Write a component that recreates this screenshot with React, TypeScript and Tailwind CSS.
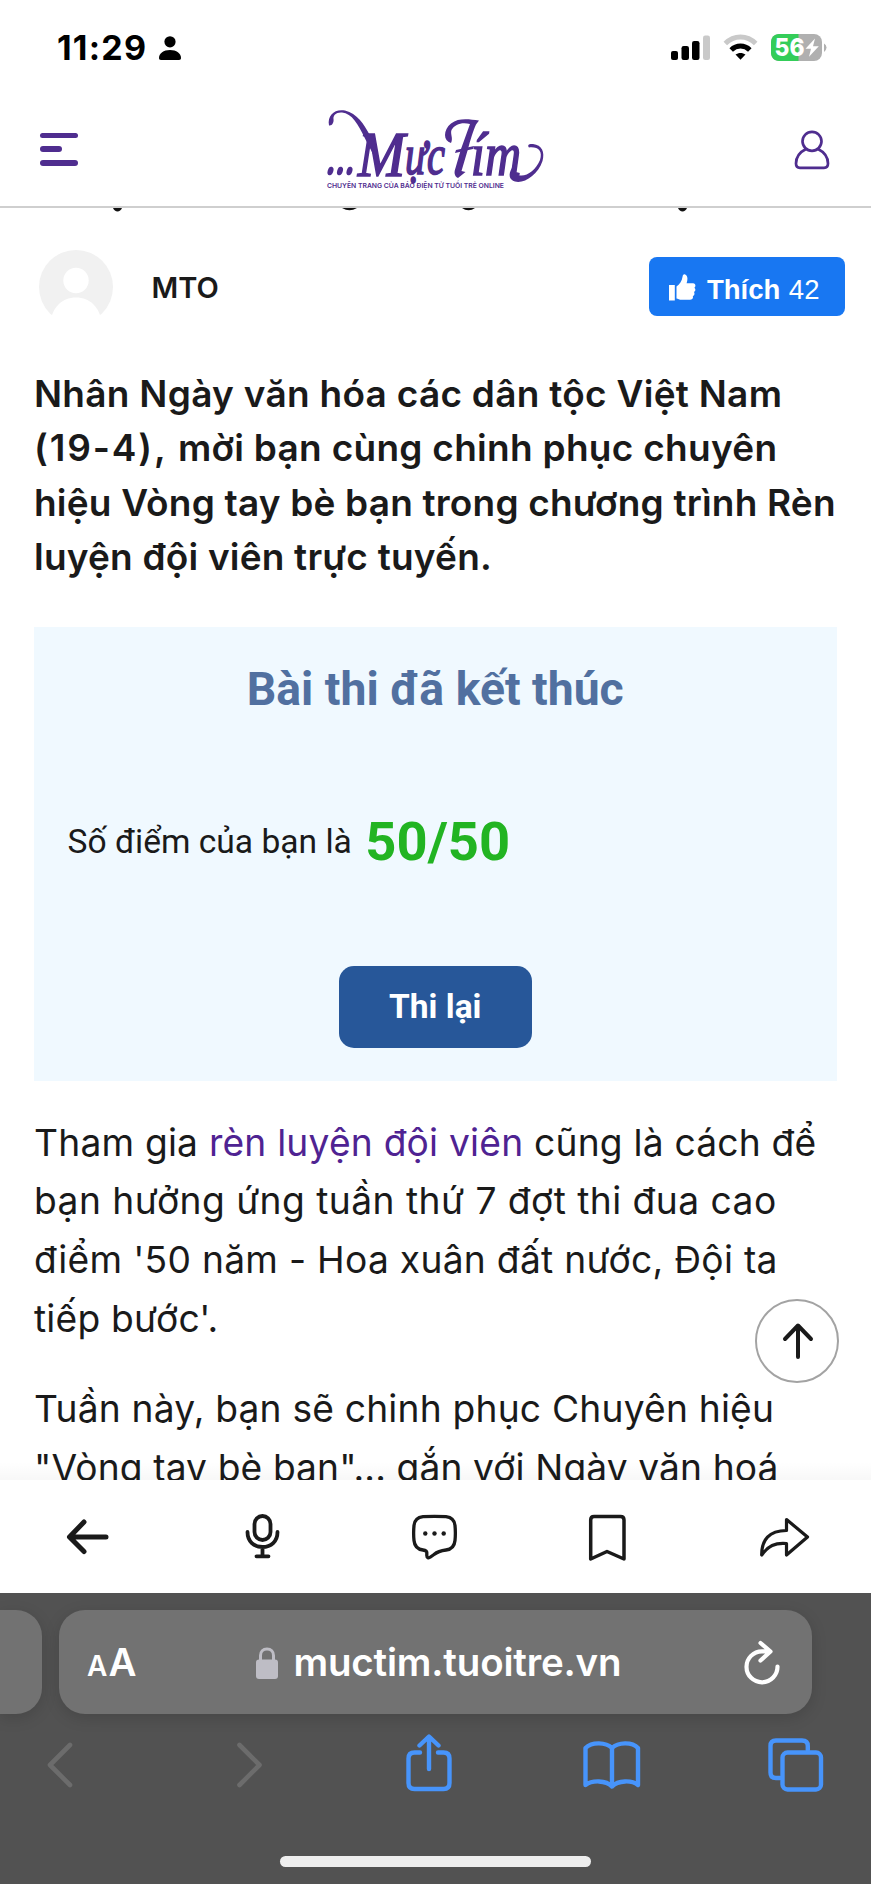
import type { ReactNode } from 'react';

function StatusBar() {
  return (
    <div className="flex h-[96px] items-center justify-between pl-[57px] pr-[44px]">
      <div className="flex items-center text-black">
        <span className="w-[102px] text-[34px] leading-none font-bold tracking-[1.200px]">11:29</span>
        <svg className="h-[24px] w-[22px]" viewBox="0 0 22 24" fill="currentColor">
          <circle cx="11" cy="5.8" r="5.6" />
          <path d="M2 24C.6 24 0 23 0 21.700C0 17.500 4.600 14 11 14S22 17.500 22 21.700C22 23 21.400 24 20 24Z" />
        </svg>
      </div>
      <div className="flex items-center">
        <svg className="h-[36px] w-[156px]" viewBox="0 -4 156 36">
          <rect x="0" y="17" width="7" height="9" rx="2" />
          <rect x="10.500" y="12" width="7.500" height="14" rx="2.200" />
          <rect x="21" y="7" width="7.500" height="19" rx="2.200" />
          <rect x="32" y="1.500" width="7" height="24.500" rx="2.200" fill="#c9c9c9" />
          <path d="M54.300 9.600C63 .9 76 .9 84.700 9.600" fill="none" stroke="#c9c9c9" strokeWidth="5" />
          <path d="M60.200 16C65.500 10.800 73.500 10.800 78.800 16" fill="none" stroke="#000" strokeWidth="5" />
          <path d="M64.500 20.500C67.500 18.400 71.500 18.400 74.500 20.500L69.500 25.700Z" />
          <rect x="100" y="0" width="51" height="27" rx="8" fill="#b0b0b0" />
          <path d="M108 0H127.500V27H108C103.600 27 100 23.400 100 19V8C100 3.600 103.600 0 108 0Z" fill="#34cd59" />
          <path d="M153 9.500Q155.500 11 155.500 13.500T153 18Z" fill="#b0b0b0" />
          <text x="103.500" y="22.300" fontFamily="Inter, sans-serif" fontWeight="800" fontSize="25" fill="#fff" textLength="30" lengthAdjust="spacingAndGlyphs">56</text>
          <path d="M144 4.500L134.500 14.800H140L138 22.800L147.800 12.200H142Z" fill="#fff" />
        </svg>
      </div>
    </div>
  );
}

function Logo() {
  return (
    <svg className="h-[86px] w-[224px]" viewBox="324 106 224 86" fill="#4f2d8f">
      <g fontFamily="'Liberation Serif', serif" fontStyle="italic" stroke="#4f2d8f" strokeWidth="1.700">
        <g stroke="none">
          <ellipse cx="331.500" cy="171" rx="2.800" ry="4.400" transform="rotate(18 331.500 171)" />
          <ellipse cx="341" cy="171" rx="2.800" ry="4.400" transform="rotate(18 341 171)" />
          <ellipse cx="350.500" cy="171" rx="2.800" ry="4.400" transform="rotate(18 350.500 171)" />
        </g>
        <text x="359" y="176" fontSize="63" textLength="47" lengthAdjust="spacingAndGlyphs">M</text>
        <text x="406" y="174" fontSize="56" textLength="40" lengthAdjust="spacingAndGlyphs">ực</text>
        <text x="472" y="175" fontSize="62" textLength="50" lengthAdjust="spacingAndGlyphs">ím</text>
      </g>
      <path d="M330 125.500C328 115 336 108.500 346 110.500C358 113.500 365 124 371 135.500L377 146L374 154L366 138.500C359 124 353 113.500 343 112.500C337 112 334 115.500 334.500 119C335 122 333.500 126 330 125.500Z" />
      <path d="M452 143C444 141 444 130 452 123.500C460 117.500 470 119.500 480 120.500L477 124.500C474.500 130 471 141 469 149L462.500 171L466.500 172L459 178C455 176 455 172 456.500 168L462 149L471 124C463 122 456 124 452.500 130C451 134 454.500 138 452 143Z" />
      <path d="M457 150L475 146L474 149L456 153Z" />
      <path d="M513 168C518 182 535 175 541 160C544 151 539 146.500 530 147.500C528 145 530 143.500 534 144C543 145 546 152 543.500 161C539 175 525 184 516 181.500C510 180 509 174 513 168Z" />
      <text x="328" y="187.500" fontFamily="Inter, sans-serif" fontWeight="600" fontSize="6.800" textLength="177" lengthAdjust="spacingAndGlyphs">CHUYÊN TRANG CỦA BÁO ĐIỆN TỬ TUỔI TRẺ ONLINE</text>
    </svg>
  );
}

function SiteHeader() {
  return (
    <div className="flex h-[110px] items-start justify-between pl-[40px] pr-[41px]">
      <button className="mt-[36.500px] flex w-[224px] flex-col gap-[8.200px]">
        <span className="h-[5.800px] w-[38px] rounded-full bg-[#4f2d8f]" />
        <span className="h-[5.800px] w-[22px] rounded-full bg-[#4f2d8f]" />
        <span className="h-[5.800px] w-[38px] rounded-full bg-[#4f2d8f]" />
      </button>
      <div className="mt-[10px] -ml-[1px]">
        <Logo />
      </div>
      <div className="mt-[33.500px] flex w-[224px] justify-end">
        <svg className="h-[40px] w-[36px]" viewBox="0 0 36 40" fill="none" stroke="#4f2d8f" strokeWidth="2.700">
          <circle cx="18" cy="11.300" r="9.500" />
          <path d="M12 19C6 22 2 27.500 2 33.500C2 36.700 3.600 37.800 6 37.800H30C32.500 37.800 34 36.700 34 33.500C34 27.500 30 22 24 19" />
        </svg>
      </div>
    </div>
  );
}

function TitleDescenders() {
  return (
    <svg className="h-[5px] w-full" viewBox="0 0 871 5" fill="#111">
      <path d="M113 0H122Q120.500 3.400 117.500 3.400T113 0Z" />
      <path d="M342 0H357Q353 2.300 349.500 2.300T342 0Z" />
      <path d="M462 0H475Q472 2.300 468.500 2.300T462 0Z" />
      <path d="M678 0H687Q685.500 3.400 682.500 3.400T678 0Z" />
    </svg>
  );
}

function Author() {
  return (
    <div className="flex h-[74px] items-center pl-[39px] pr-[26px]">
      <svg className="h-[74px] w-[74px]" viewBox="0 0 74 74">
        <circle cx="37" cy="37" r="37" fill="#f1f1f1" />
        <circle cx="37" cy="30.500" r="12.700" fill="#fff" />
        <path d="M11 74C13 57 23 47.500 37 47.500S61 57 63 74Z" fill="#fff" />
      </svg>
      <span className="mt-[1px] ml-[38.500px] text-[29px] font-semibold text-[#1a1a1a]">MTO</span>
      <button className="mb-[1px] ml-auto flex h-[59px] w-[196px] items-center rounded-[8px] bg-[#1877f2] pl-[20px] font-['Liberation_Sans',sans-serif] text-[27.500px] text-white">
        <svg className="mt-[2px] h-[27px] w-[27px]" viewBox="0 0 27 27" fill="currentColor">
          <path d="M0 11H5.800V26.500H0Z" />
          <path d="M7.500 12.500C10.500 10.500 13 7 13.600 2.500C13.800 .8 14.800 0 16.200 .4C19 1.400 18.800 6 17.600 9.300H24C26.600 9.300 27.200 12.400 25.400 13.700C27 15.200 26.500 17.300 25 18.100C26 19.800 25.300 21.500 23.800 22.100C24.500 24.300 23.300 25.700 21 25.700H12.500C10.500 25.700 9 24.800 7.500 24.400Z" />
        </svg>
        <span className="mt-[7px] ml-[11px] font-bold">Thích</span>
        <span className="mt-[7px] ml-[8.500px]">42</span>
      </button>
    </div>
  );
}

function Line({ className, children }: { className: string; children: ReactNode }) {
  return <span className={`block whitespace-nowrap ${className}`}>{children}</span>;
}

function Article() {
  return (
    <main className="relative h-[1272px] overflow-hidden text-[#1a1a1a]">
      <TitleDescenders />
      <div className="mt-[37px]">
        <Author />
      </div>
      <h2 className="mt-[42.500px] pl-[34px] text-[37px] leading-[54.600px] font-semibold">
        <Line className="tracking-[0.280px]">Nhân Ngày văn hóa các dân tộc Việt Nam</Line>
        <Line className="tracking-[0.280px]">
          <span className="tracking-[1.850px]">(19-4), </span>mời bạn cùng chinh phục chuyên
        </Line>
        <Line className="tracking-[0.190px]">hiệu Vòng tay bè bạn trong chương trình Rèn</Line>
        <Line className="tracking-[0.200px]">luyện đội viên trực tuyến.</Line>
      </h2>
      <section className="mt-[42.100px] mr-[34px] ml-[33.500px] flex h-[454px] flex-col bg-[#f0f9ff] font-[Roboto,sans-serif]">
        <h3 className="mt-[35px] text-center text-[46.300px] leading-[54px] font-bold text-[#5170a0]">Bài thi đã kết thúc</h3>
        <p className="mt-[91px] flex h-[70px] items-center pl-[34px] whitespace-nowrap">
          <span className="text-[33.600px] leading-[40px]">Số điểm của bạn là</span>
          <span className="ml-[13.500px] text-[54.300px] leading-[70px] font-bold text-[#22b422]">50/50</span>
        </p>
        <button className="mx-auto mt-[89px] h-[82px] w-[193px] rounded-[15px] bg-[#275799] text-[33.500px] font-bold text-white">Thi lại</button>
      </section>
      <div className="mt-[32.600px] flex flex-col gap-[31px] pl-[34px] text-[37.200px] leading-[58.900px]">
        <p>
          <Line className="tracking-[0.200px]">
            Tham gia <a className="text-[#4f2392]">rèn luyện đội viên</a> cũng là cách để
          </Line>
          <Line className="tracking-[0.450px]">bạn hưởng ứng tuần thứ 7 đợt thi đua cao</Line>
          <Line className="tracking-[0.280px]">điểm '50 năm - Hoa xuân đất nước, Đội ta</Line>
          <Line className="tracking-[0.200px]">tiếp bước'.</Line>
        </p>
        <p>
          <Line className="tracking-[0.190px]">Tuần này, bạn sẽ chinh phục Chuyên hiệu</Line>
          <Line className="tracking-[0.100px]">"Vòng tay bè bạn"... gắn với Ngày văn hoá</Line>
        </p>
      </div>
      <div className="absolute inset-x-0 bottom-0 h-[18px] bg-gradient-to-b from-transparent to-black/[0.03]" />
      <button className="absolute top-[1091px] right-[32px] flex h-[84px] w-[84px] items-center justify-center rounded-full border-2 border-[#a3a3a3] bg-white pl-[2px]">
        <svg className="h-[38px] w-[32px]" viewBox="0 0 32 38" fill="none" stroke="#1a1a1a" strokeWidth="4" strokeLinecap="round" strokeLinejoin="round">
          <path d="M16 35V4M3 17L16 3.500L29 17" />
        </svg>
      </button>
    </main>
  );
}

function ArticleToolbar() {
  return (
    <div className="flex h-[113px] items-start bg-white pt-[32px] pl-[66px]">
      <svg className="h-[50px] w-[44px] shrink-0" viewBox="66 1512 44 50" fill="none" stroke="#1a1a1a" strokeWidth="5" strokeLinecap="round" strokeLinejoin="round">
        <path d="M106 1537H70M84 1522L69.500 1537L84 1551.500" />
      </svg>
      <svg className="ml-[134px] h-[50px] w-[38px] shrink-0" viewBox="244 1512 38 50" fill="none" stroke="#1a1a1a" strokeWidth="3.800" strokeLinecap="round">
        <rect x="254.500" y="1516" width="16" height="24" rx="8" />
        <path d="M247.500 1532C247.500 1541.500 254 1547 262.500 1547S277.500 1541.500 277.500 1532M262.500 1547V1556M256.500 1556.300H268.500" />
      </svg>
      <svg className="ml-[128px] h-[50px] w-[48px] shrink-0" viewBox="410 1512 48 50" fill="none" stroke="#1a1a1a" strokeWidth="3.300" strokeLinejoin="round">
        <path d="M423 1516.700C431 1516.200 438 1516.200 446 1516.700C451.500 1517.400 454.500 1520.500 455 1525.500C455.500 1530.500 455.500 1535.500 455 1540.500C454.500 1546 451.500 1549.300 446 1550C441 1550.600 437 1552 434 1554.500L430.500 1557C428.500 1558.500 426.800 1557.800 426.800 1555.500V1552.500C426.800 1551 425.500 1550.400 423 1550C417.500 1549.300 414.500 1546 414 1540.500C413.500 1535.500 413.500 1530.500 414 1525.500C414.500 1520.500 417.500 1517.400 423 1516.700Z" />
        <g fill="#1a1a1a" stroke="none">
          <circle cx="425.300" cy="1533.500" r="2.200" />
          <circle cx="434.500" cy="1533.500" r="2.200" />
          <circle cx="443.700" cy="1533.500" r="2.200" />
        </g>
      </svg>
      <svg className="ml-[128px] h-[50px] w-[42px] shrink-0" viewBox="586 1512 42 50" fill="none" stroke="#1a1a1a" strokeWidth="3.500" strokeLinejoin="round">
        <path d="M590.700 1520C590.700 1517.500 591.500 1516.500 594 1516.500H620.500C623 1516.500 624 1517.500 624 1520V1559L607 1551.500L590.700 1559Z" />
      </svg>
      <svg className="ml-[131px] h-[50px] w-[52px] shrink-0" viewBox="759 1512 52 50" fill="none" stroke="#1a1a1a" strokeWidth="3.200" strokeLinejoin="round">
        <path d="M786.500 1519.500L807.500 1537L786.500 1555V1543.500C775 1542.500 768 1546 761.700 1555C761.500 1540 769 1530.500 786.500 1530.500Z" />
      </svg>
    </div>
  );
}

function BrowserChrome() {
  return (
    <div className="h-[291px] overflow-hidden bg-[#525252] pt-[17px]">
      <div className="flex gap-[17px]">
        <div className="h-[104px] w-[42px] rounded-r-[26px] bg-[#727272] shadow-[0_4px_16px_rgba(0,0,0,0.14)]" />
        <div className="flex h-[104px] w-[753px] items-center rounded-[26px] bg-[#727272] pr-[30px] pl-[28px] text-white shadow-[0_4px_16px_rgba(0,0,0,0.14)]">
          <div className="flex h-[40px] w-[50px] items-baseline leading-[40px] font-semibold">
            <span className="text-[28px]">A</span>
            <span className="ml-[1px] text-[38.500px]">A</span>
          </div>
          <svg className="mt-[1px] ml-[118px] h-[32px] w-[24px]" viewBox="0 0 24 32">
            <rect x="1" y="12.500" width="22" height="19.500" rx="3" fill="#bebdc5" />
            <path d="M5.500 14V8.500C5.500 4.500 8 2 12 2S18.500 4.500 18.500 8.500V14" fill="none" stroke="#bebdc5" strokeWidth="3" />
          </svg>
          <span className="ml-[14.500px] text-[38.500px] leading-none font-semibold tracking-[-0.200px]">muctim.tuoitre.vn</span>
          <svg className="mb-[1px] ml-auto h-[46px] w-[40px]" viewBox="743 1636 40 46" fill="none" stroke="#fff" strokeWidth="4.200" strokeLinecap="round" strokeLinejoin="round">
            <path d="M770.500 1648.300H763A15.500 15.500 0 1 0 778.500 1663.500M761.500 1640L771.500 1648.500L761.500 1657.500" />
          </svg>
        </div>
      </div>
      <div className="mt-[18px] flex h-[64px] pl-[46px]">
        <svg className="h-[64px] w-[28px] shrink-0" viewBox="46 1732 28 64" fill="none" stroke="#6c6c6c" strokeWidth="4.600" strokeLinecap="round" strokeLinejoin="round">
          <path d="M70 1745L50 1765L70 1785" />
        </svg>
        <svg className="ml-[162px] h-[64px] w-[28px] shrink-0" viewBox="236 1732 28 64" fill="none" stroke="#6c6c6c" strokeWidth="4.600" strokeLinecap="round" strokeLinejoin="round">
          <path d="M239.500 1745L259.500 1765L239.500 1785" />
        </svg>
        <svg className="ml-[140px] h-[64px] w-[50px] shrink-0" viewBox="404.500 1732 50 64" fill="none" stroke="#4794fb" strokeWidth="4.400" strokeLinecap="round" strokeLinejoin="round">
          <path d="M420.500 1752.500H415Q409 1752.500 409 1758.500V1783Q409 1789 415 1789H444Q450 1789 450 1783V1758.500Q450 1752.500 444 1752.500H438.500M429.500 1769V1737M420 1745.500L429.500 1736.500L439 1745.500" />
        </svg>
        <svg className="ml-[126px] h-[64px] w-[64px] shrink-0" viewBox="580 1732 64 64" fill="none" stroke="#4794fb" strokeWidth="4.400" strokeLinecap="round" strokeLinejoin="round">
          <path d="M612 1748V1786.500M612 1748C606 1742.200 592 1741.500 585.500 1748V1785C592 1780 606 1780 612 1786.500C618 1780 632 1780 638 1785V1748C632 1741.500 618 1742.200 612 1748Z" />
        </svg>
        <svg className="ml-[123px] h-[64px] w-[58px] shrink-0" viewBox="767 1732 58 64" fill="none" stroke="#4794fb" strokeWidth="4.400" strokeLinejoin="round" strokeLinecap="round">
          <path d="M780 1778H776Q770.500 1778 770.500 1772.500V1746Q770.500 1740.500 776 1740.500H802Q807.800 1740.500 807.800 1746V1750" />
          <rect x="782.500" y="1752.500" width="38.500" height="37" rx="5" />
        </svg>
      </div>
      <div className="mt-[60px] ml-[280px] h-[11px] w-[311px] rounded-full bg-[#eeeeee]" />
    </div>
  );
}

export default function App() {
  return (
    <div className="h-[1884px] w-[871px] overflow-hidden bg-white font-[Inter,sans-serif]">
      <header className="h-[208px] border-b-2 border-[#cfcfcf]">
        <StatusBar />
        <SiteHeader />
      </header>
      <Article />
      <ArticleToolbar />
      <BrowserChrome />
    </div>
  );
}
